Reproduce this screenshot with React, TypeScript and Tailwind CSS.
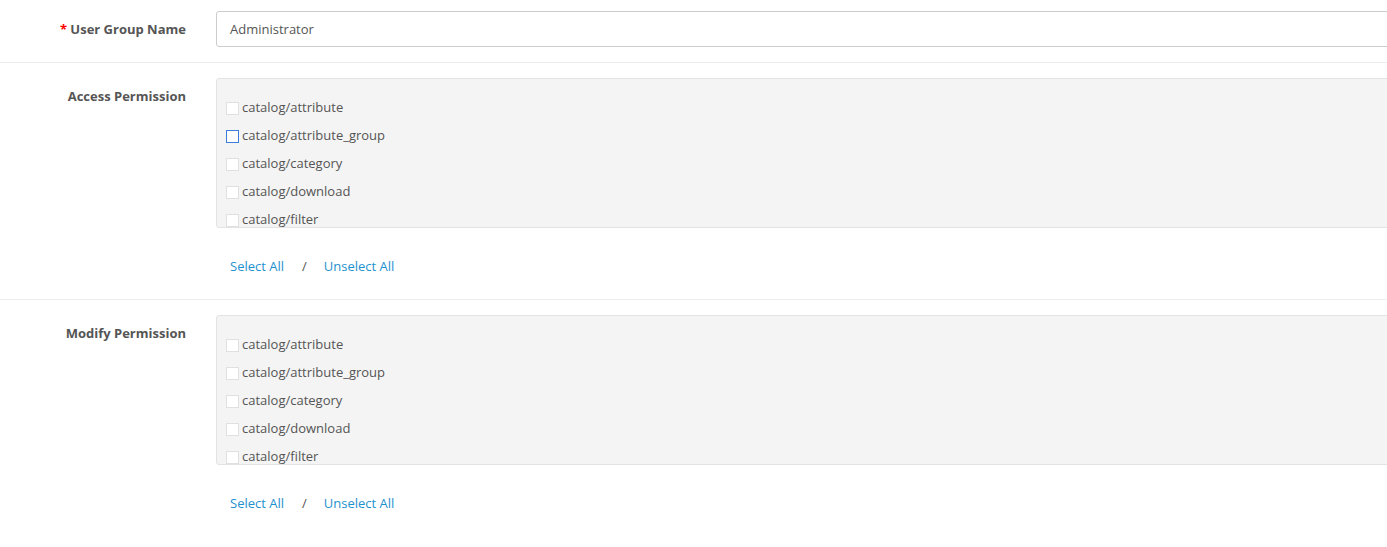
import React from "react";

const items = [
  "catalog/attribute",
  "catalog/attribute_group",
  "catalog/category",
  "catalog/download",
  "catalog/filter",
  "catalog/information",
];

function PermBox({ focused }: { focused?: boolean }) {
  return (
    <div>
      <div className="h-[150px] overflow-hidden bg-[#f4f4f4] border border-[#e3e3e3] rounded-[3px] pl-[9px] pt-[15px]">
        {items.map((it, i) => (
          <div key={it} className="flex items-center h-[28px]">
            <span
              className={
                "inline-block w-[13px] h-[13px] bg-white border mr-[3px] " +
                (focused && i === 1 ? "border-[#3b7ddd]" : "border-[#e0e0e0]")
              }
            />
            <span className="text-[13px] text-[#555]">{it}</span>
          </div>
        ))}
      </div>
      <div className="mt-[29px] pl-[14px] leading-[18px] flex items-center text-[13px] text-[#1e91cf]">
        <span>Select All</span>
        <span className="text-[#555] ml-[18px] mr-[17px]">/</span>
        <span>Unselect All</span>
      </div>
    </div>
  );
}

export default function App() {
  return (
    <div
      className="w-[1387px] h-[547px] bg-white overflow-hidden"
      style={{ fontFamily: '"Open Sans", sans-serif' }}
    >
      <div className="flex pt-[11px] pb-[15px] border-b border-[#ededed]">
        <div className="w-[186px] shrink-0 text-right pt-[9px] text-[13px] font-bold text-[#555] leading-[18px]">
          <span className="text-[#f00]">* </span>User Group Name
        </div>
        <div className="ml-[30px] flex-1">
          <div className="h-[36px] border border-[#ccc] rounded-[3px] flex items-center pl-[13px] pt-[1px] text-[13px] text-[#555] -mr-[4px]">
            Administrator
          </div>
        </div>
      </div>
      <div className="flex pt-[15px] pb-[24px] border-b border-[#ededed]">
        <div className="w-[186px] shrink-0 text-right pt-[9px] text-[13px] font-bold text-[#555] leading-[18px]">
          Access Permission
        </div>
        <div className="ml-[30px] flex-1 -mr-[4px]">
          <PermBox focused />
        </div>
      </div>
      <div className="flex pt-[15px] pb-[24px]">
        <div className="w-[186px] shrink-0 text-right pt-[9px] text-[13px] font-bold text-[#555] leading-[18px]">
          Modify Permission
        </div>
        <div className="ml-[30px] flex-1 -mr-[4px]">
          <PermBox />
        </div>
      </div>
    </div>
  );
}
